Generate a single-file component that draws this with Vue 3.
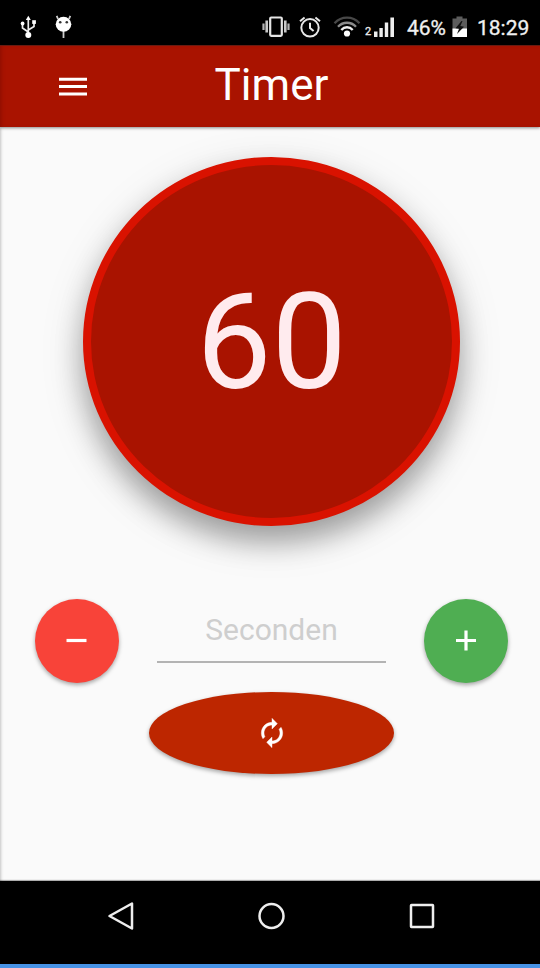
<script setup>
import { ref } from 'vue'

const seconds = ref(60)
const input = ref('')
const step = (n) => { seconds.value = Math.max(0, seconds.value + n) }
const reset = () => { seconds.value = 60 }
</script>

<template>
  <div class="screen">
    <div class="status">
      <svg class="usb" width="18" height="24" viewBox="0 0 18 24" fill="none" stroke="#eee" stroke-width="1.7">
        <path d="M8.3 3V20M8.3 17L2.500 13V9.500M8.300 15L14 11.500V7.500" />
        <g fill="#fff" stroke="none">
          <path d="M8.300 0.800L10.800 5H5.800z" />
          <circle cx="2.600" cy="8.500" r="1.900" />
          <path d="M12.200 5.200h3.700v3.700h-3.700z" />
          <circle cx="8.300" cy="20" r="3" />
        </g>
      </svg>
      <svg class="bug" width="18" height="24" viewBox="0 0 18 24">
        <path d="M3 4L1.700 0.800M14 4L15.300 0.800M8.500 15V23" stroke="#ccc" stroke-width="1.800" />
        <ellipse cx="8.500" cy="9.200" rx="7.800" ry="7.500" fill="#fff" />
        <circle cx="5.200" cy="7.200" r="1.300" fill="#333" />
        <circle cx="11.800" cy="7.200" r="1.300" fill="#333" />
      </svg>
      <svg class="vibrate" width="28" height="22" viewBox="0 0 28 22" fill="none" stroke="#e4e4e4">
        <rect x="8.200" y="1.500" width="11.600" height="18.300" rx="1" stroke-width="2.200" />
        <path d="M4.700 4.500v12M23.300 4.500v12" stroke-width="2.600" stroke="#c8c8c8" />
        <path d="M1.500 7.500v6.500M26.500 7.500v6.500" stroke-width="2.200" stroke="#b4b4b4" />
      </svg>
      <svg class="alarm" width="22" height="22" viewBox="0 0 22 22" fill="none" stroke="#e8e8e8" stroke-width="2">
        <circle cx="11" cy="11.800" r="8.700" />
        <path d="M11 6.800V12l3.600 3M1 5.200L5.600 1.500M21 5.200L16.400 1.500" />
      </svg>
      <svg class="wifi" width="28" height="22" viewBox="0 0 28 22" fill="none" stroke-width="2.300">
        <path d="M1.500 7.200C8.500 -0.200 19.500 -0.200 26.500 7.200" stroke="#484848" />
        <path d="M5 10.800C10 5.400 18 5.400 23 10.800" stroke="#8b8b8b" />
        <path d="M8.300 14C11.500 10.300 16.500 10.300 19.700 14" stroke="#eee" />
        <circle cx="14" cy="17.500" r="3.100" fill="#fff" />
      </svg>
      <span class="sim">2</span>
      <svg class="signal" width="21" height="21" viewBox="0 0 21 21" fill="#eee">
        <path d="M0 14.500h3.500V20H0zM5.400 11h3.400v9H5.400zM10.800 5.500h3.400V20h-3.400zM16.400 0.500h3.600V20h-3.600z" />
      </svg>
      <span class="percent">46%</span>
      <svg class="battery" width="16" height="22" viewBox="0 0 16 22">
        <path d="M4.500 0.500h6v2H15V21H0.500V2.500h4z" fill="#5c5c5c" />
        <path d="M0.500 12.500H15V21H0.500z" fill="#fff" />
        <path d="M9.500 5L3.500 12.200l3.500 0.500L5 18l7-7.300-3.700-0.600L10.500 5z" fill="#111" />
      </svg>
      <span class="clock">18:29</span>
    </div>

    <header class="toolbar">
      <svg class="menu" width="28" height="20" viewBox="0 0 28 20">
        <path d="M0 2.300h28M0 9.600h28M0 16.900h28" stroke="#fff" stroke-width="3" />
      </svg>
      <h1>Timer</h1>
    </header>

    <main>
      <div class="dial"><span>{{ seconds }}</span></div>
      <div class="controls">
        <button class="round minus" aria-label="-" @click="step(-1)">
          <svg width="22" height="22" viewBox="0 0 22 22"><path d="M0.500 10.500h20" stroke="#fff" stroke-width="3.200" /></svg>
        </button>
        <input v-model="input" class="field" placeholder="Seconden" />
        <button class="round plus" aria-label="+" @click="step(1)">
          <svg width="22" height="22" viewBox="0 0 22 22"><path d="M1 10.500h20M11 0.500v20" stroke="#fff" stroke-width="3.200" /></svg>
        </button>
      </div>
      <button class="reset" @click="reset">
        <svg width="32" height="32" viewBox="0 0 24 24" fill="#fff" stroke="#fff" stroke-width="0.300">
          <path d="M12 6v3l4-4-4-4v3c-4.420 0-8 3.580-8 8 0 1.570.46 3.030 1.240 4.260L6.700 14.800c-.45-.83-.7-1.790-.7-2.800 0-3.310 2.690-6 6-6zm6.760 1.740L17.300 9.200c.44.84.7 1.790.7 2.800 0 3.310-2.690 6-6 6v-3l-4 4 4 4v-3c4.420 0 8-3.580 8-8 0-1.570-.46-3.030-1.240-4.260z" />
        </svg>
      </button>
    </main>

    <nav class="navbar">
      <svg width="28" height="30" viewBox="0 0 28 30"><path d="M2.500 15L25 2.500v25z" /></svg>
      <svg width="28" height="30" viewBox="0 0 28 30"><circle cx="13.500" cy="15" r="12" /></svg>
      <svg width="28" height="30" viewBox="0 0 28 30"><rect x="3" y="4" width="22" height="22" rx="0.500" /></svg>
    </nav>
    <div class="strip"></div>
  </div>
</template>

<style>
body { margin: 0; background: #fafafa; }
</style>

<style scoped>
.screen {
  width: 540px;
  height: 968px;
  display: flex;
  flex-direction: column;
  overflow: hidden;
  background: #fafafa;
  font-family: Roboto, "Liberation Sans", sans-serif;
}
.screen * { box-sizing: border-box; }
svg { display: block; flex: none; }
.status {
  height: 45px;
  flex: none;
  display: flex;
  align-items: center;
  padding: 9px 0 0 20px;
  background: #000;
  color: #f0f0f0;
  font-size: 21px;
  line-height: 25px;
  -webkit-text-stroke: 0.3px #f0f0f0;
}
.bug { margin-left: 17px; }
.vibrate { margin-left: 189px; }
.alarm { margin-left: 9px; }
.wifi { margin-left: 12px; }
.sim { width: 7px; margin: 10px 0 0 4px; font-size: 11px; line-height: 12px; }
.signal { margin-left: 2px; }
.percent { width: 39px; margin-left: 12px; padding-top: 2px; }
.battery { margin-left: 6px; }
.clock { margin-left: 9px; padding-top: 2px; }
.toolbar {
  height: 82px;
  flex: none;
  display: grid;
  grid-template-columns: 156px 1fr 156px;
  align-items: center;
  position: relative;
  background: #a91300;
  border-top: 1px solid #6b1a10;
  box-shadow: inset 3px 0 4px -2px rgba(70, 0, 0, 0.3), 0 1px 3px rgba(0, 0, 0, 0.45);
}
.menu { margin-left: 59px; }
h1 {
  margin: 0 0 4px;
  padding-left: 3px;
  color: #fff;
  font-size: 44px;
  line-height: 52px;
  font-weight: 400;
  text-align: center;
}
main {
  flex: 1;
  display: flex;
  flex-direction: column;
  align-items: center;
  padding: 30px 0 0 3px;
  background: #fafafa;
  box-shadow: inset 3px 0 3px -2px rgba(0, 0, 0, 0.22);
}
.dial {
  width: 377px;
  height: 369px;
  flex: none;
  display: flex;
  align-items: center;
  justify-content: center;
  padding-top: 2px;
  border: 8px solid #d91200;
  border-radius: 50%;
  background: #a91300;
  box-shadow: 0 12px 46px rgba(0, 0, 0, 0.13), 0 16px 28px rgba(0, 0, 0, 0.3);
  color: #ffebee;
  font-size: 134px;
  line-height: 150px;
}
.controls {
  width: 473px;
  height: 84px;
  margin-top: 73px;
  flex: none;
  display: flex;
  justify-content: space-between;
}
button {
  display: flex;
  align-items: center;
  justify-content: center;
  padding: 0;
  border: 0;
  border-radius: 50%;
  box-shadow: 0 2px 4px rgba(0, 0, 0, 0.35);
}
.round { width: 84px; height: 84px; }
.minus { background: #f84339; }
.plus { background: #4fae52; }
.field {
  width: 229px;
  height: 64px;
  padding: 0 0 2px;
  border: 0;
  border-bottom: 2px solid #b3b3b3;
  outline: 0;
  background: transparent;
  color: #333;
  font-family: inherit;
  font-size: 30px;
  text-align: center;
}
.field::placeholder { color: #cecece; opacity: 1; }
.reset {
  width: 245px;
  height: 82px;
  margin-top: 9px;
  flex: none;
  background: #bd2600;
}
.navbar {
  height: 83px;
  flex: none;
  display: flex;
  justify-content: space-between;
  padding: 20px 104px 0 107px;
  position: relative;
  background: #000;
  box-shadow: 0 -1px 1px rgba(0, 0, 0, 0.3);
}
.navbar svg { fill: none; stroke: #eee; stroke-width: 2.5; stroke-linejoin: round; }
.strip { height: 4px; flex: none; background: #4793e6; }
</style>
